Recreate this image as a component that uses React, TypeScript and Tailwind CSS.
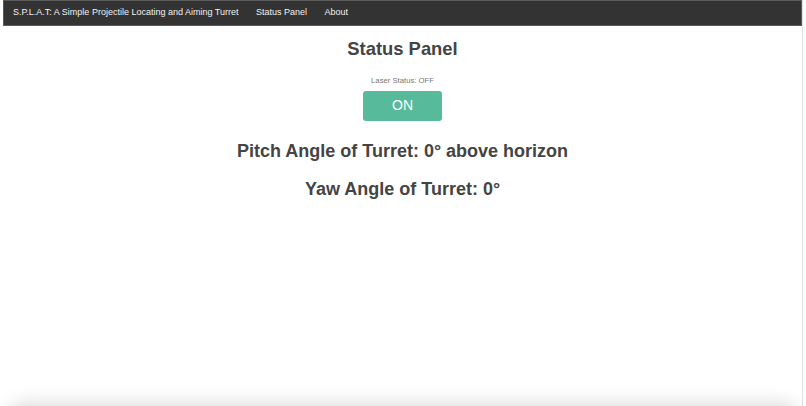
const font = { fontFamily: '"Liberation Sans", Arial, sans-serif' };

const navLinks = ["Status Panel", "About"];

export default function App() {
  return (
    <div className="relative h-[406px] w-[806px] overflow-hidden bg-white" style={font}>
      <div className="ml-[3px] flex h-full w-[800px] flex-col border-r border-[#e2e2e2]">
        <nav className="flex h-[26px] items-center gap-[17.5px] border border-[#5a5a5a] bg-[#333333] pl-[9px] text-[9px] text-[#f2f2f2]">
          <span>S.P.L.A.T: A Simple Projectile Locating and Aiming Turret</span>
          {navLinks.map((link) => (
            <span key={link}>{link}</span>
          ))}
        </nav>

        <main className="flex flex-col items-center text-[#444444]">
          <h1 className="mt-[12px] text-[18.4px] font-bold leading-[21px]">Status Panel</h1>
          <p className="mt-[17px] text-[7.7px] leading-[9px] text-[#777777]">Laser Status: OFF</p>
          <button className="mt-[5.5px] h-[30px] w-[79px] rounded-[3px] bg-[#57ba9a] text-[14px] text-white">
            ON
          </button>
          <h2 className="mt-[20.5px] text-[18px] font-bold leading-[21px]">
            Pitch Angle of Turret: 0° above horizon
          </h2>
          <h2 className="mt-[16.5px] text-[18px] font-bold leading-[21px]">Yaw Angle of Turret: 0°</h2>
        </main>
      </div>

      {/* window shadow at the bottom edge */}
      <div className="absolute left-[14px] right-[14px] top-[408px] h-[20px] rounded-[12px] shadow-[0_0_18px_6px_rgba(0,0,0,0.13)]" />
    </div>
  );
}
